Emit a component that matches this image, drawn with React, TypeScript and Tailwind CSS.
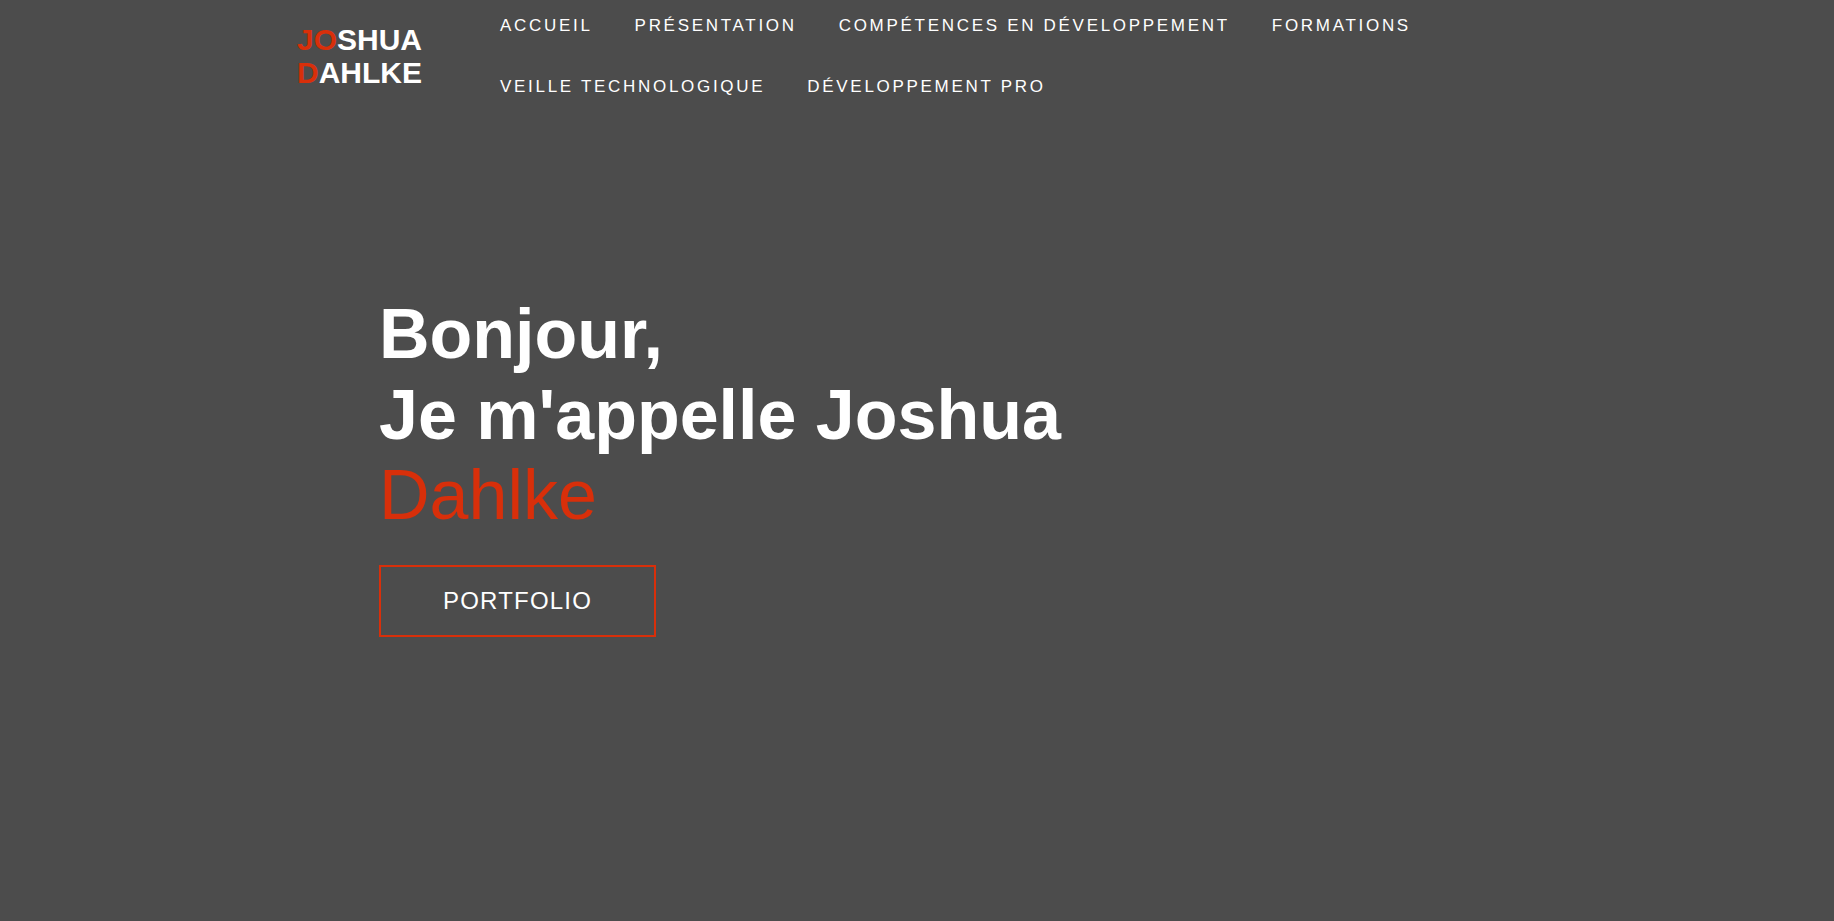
const navItems = [
  'Accueil',
  'Présentation',
  'Compétences en développement',
  'Formations',
  'Veille technologique',
  'Développement pro',
]

function Header() {
  return (
    <header className="w-[1240px] mx-auto flex items-start">
      <a
        href="#"
        className="w-[182px] shrink-0 pt-[23px] text-[30px] leading-[33px] font-bold text-white uppercase"
      >
        <span className="block">
          <span className="text-[#d82f0a]">Jo</span>shua
        </span>
        <span className="block">
          <span className="text-[#d82f0a]">D</span>ahlke
        </span>
      </a>
      <nav className="flex flex-wrap flex-1">
        {navItems.map(item => (
          <a
            key={item}
            href="#"
            className="px-[21px] pt-4 pb-[25px] text-[17px] leading-5 tracking-[2.7px] uppercase text-white"
          >
            {item}
          </a>
        ))}
      </nav>
    </header>
  )
}

export default function App() {
  return (
    <div className="min-h-screen bg-[#4c4c4c] font-['Liberation_Sans',Arial,sans-serif]">
      <Header />
      <section className="w-[1076px] mx-auto pt-[172px]">
        <h1 className="text-[70px] leading-[80.5px] font-bold text-white">
          <span className="block">Bonjour,</span>
          <span className="block">Je m'appelle Joshua</span>
          <span className="block font-normal text-[#d82f0a]">Dahlke</span>
        </h1>
        <a
          href="#"
          className="inline-block mt-[29px] border-2 border-[#d82f0a] px-[62px] py-5 text-[24px] leading-[28px] tracking-[1.2px] text-white"
        >
          PORTFOLIO
        </a>
      </section>
    </div>
  )
}
